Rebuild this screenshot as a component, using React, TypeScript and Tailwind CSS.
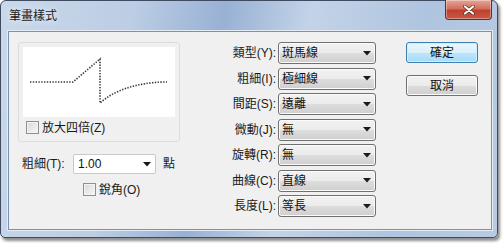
import React from "react";

const font = "font-['Liberation_Sans','Noto_Sans_CJK_TC',sans-serif]";

const rows = [
  { label: "類型(Y):", value: "斑馬線" },
  { label: "粗細(I):", value: "極細線" },
  { label: "間距(S):", value: "遠離" },
  { label: "微動(J):", value: "無" },
  { label: "旋轉(R):", value: "無" },
  { label: "曲線(C):", value: "直線" },
  { label: "長度(L):", value: "等長" },
];

function Arrow() {
  return (
    <svg width="8" height="5" viewBox="0 0 8 5" className="shrink-0">
      <path d="M0 0 H8 L4 4.5 Z" fill="#1a1a1a" />
    </svg>
  );
}

function Checkbox({ label }: { label: string }) {
  return (
    <div className="flex items-center gap-[3px]">
      <div className="w-[13px] h-[13px] border border-[#8e8f8f] bg-[linear-gradient(135deg,#d9d9d9,#f7f7f7)] shadow-[inset_0_0_0_1px_#f4f4f4]" />
      <span className="text-[12px] leading-none text-[#1a1a1a]">{label}</span>
    </div>
  );
}

function Combo({ value }: { value: string }) {
  return (
    <div className="h-[22px] w-[98px] flex items-center justify-between pl-[3px] pr-[4px] rounded-[3px] border border-[#707070] bg-[linear-gradient(180deg,#f2f2f2_0%,#ebebeb_50%,#dddddd_51%,#cfcfcf_100%)] shadow-[inset_0_0_0_1px_#fbfbfb]">
      <span className="text-[12px] leading-none text-[#111]">{value}</span>
      <Arrow />
    </div>
  );
}

function Button({ label, primary }: { label: string; primary?: boolean }) {
  return (
    <div
      className={
        primary
          ? "w-[72px] h-[21px] flex items-center justify-center rounded-[3px] border border-[#3c7fb1] bg-[linear-gradient(180deg,#eaf6fd_0%,#d9f0fc_50%,#bee6fd_51%,#a7d9f5_100%)] shadow-[inset_0_0_0_1px_#c9f1ff]"
          : "w-[72px] h-[21px] flex items-center justify-center rounded-[3px] border border-[#707070] bg-[linear-gradient(180deg,#f2f2f2_0%,#ebebeb_50%,#dddddd_51%,#cfcfcf_100%)] shadow-[inset_0_0_0_1px_#fbfbfb]"
      }
    >
      <span className="text-[12px] leading-none text-[#111]">{label}</span>
    </div>
  );
}

export default function App() {
  return (
    <div className={`w-[504px] h-[243px] bg-white ${font}`}>
      <div className="relative w-[498px] h-[238px] flex flex-col rounded-t-[6px] rounded-b-[5px] border border-[#3f4b5e] bg-[linear-gradient(100deg,#c9d8ea_0%,#bccde4_25%,#98b1d4_42%,#c3d3e8_58%,#afc4df_80%,#b9cbe3_100%)] shadow-[2px_3px_3px_rgba(0,0,0,0.45)]">
        {/* Title bar */}
        <div className="h-[30px] flex items-center pl-[8px]">
          <span className="text-[12px] text-[#1b1b1b] [text-shadow:0_0_6px_#ffffff]">筆畫樣式</span>
        </div>
        <div className="absolute top-[-1px] right-[5px] w-[47px] h-[20px] rounded-b-[4px] border border-t-0 border-[#6e2a22] bg-[linear-gradient(180deg,#e6a597_0%,#d2705f_45%,#c0412f_55%,#c55a42_100%)] flex items-center justify-center shadow-[inset_0_0_0_1px_rgba(255,255,255,0.35)]">
          <svg width="12" height="10" viewBox="0 0 12 10">
            <path d="M2 1.5 L10 8.5 M10 1.5 L2 8.5" stroke="#5a2a22" strokeWidth="3.6" strokeLinecap="round" />
            <path d="M2 1.5 L10 8.5 M10 1.5 L2 8.5" stroke="#ffffff" strokeWidth="2.2" strokeLinecap="round" />
          </svg>
        </div>

        {/* Client area */}
        <div className="ml-[7px] mr-[5px] h-[199px] border border-[#7c90b0] bg-[#f0f0f0] shadow-[0_0_0_1px_#e4ecf6] flex">
          {/* Left column */}
          <div className="ml-[9px] mt-[10px] w-[162px] flex flex-col">
            <div className="h-[100px] border border-[#dcdcdc] rounded-[3px] p-[4px] flex flex-col">
              <div className="h-[70px] bg-white">
                <svg width="152" height="70" viewBox="23 47 152 70">
                  <path
                    d="M30 82 L73 82 L100 59 L100 103 C112 92 135 82 167 82"
                    fill="none"
                    stroke="#3a3a3a"
                    strokeWidth="1.6"
                    strokeDasharray="1.4 1.4"
                  />
                </svg>
              </div>
              <div className="mt-[4px] pl-[3px]">
                <Checkbox label="放大四倍(Z)" />
              </div>
            </div>
            <div className="mt-[12px] flex items-center">
              <span className="ml-[4px] w-[51px] text-[12px] leading-none text-[#1a1a1a]">粗細(T):</span>
              <div className="h-[20px] w-[83px] flex items-center justify-between pl-[4px] pr-[4px] rounded-[2px] border border-[#c5c9d0] bg-white">
                <span className="text-[12px] leading-none text-[#111]">1.00</span>
                <Arrow />
              </div>
              <span className="ml-[7px] text-[12px] leading-none text-[#1a1a1a]">點</span>
            </div>
            <div className="mt-[9px] pl-[65px]">
              <Checkbox label="銳角(O)" />
            </div>
          </div>

          {/* Right selectors */}
          <div className="ml-[20px] mt-[10px] flex flex-col gap-[3.5px]">
            {rows.map((r) => (
              <div key={r.label} className="flex items-center">
                <span className="w-[78px] pr-[2px] text-right text-[12px] leading-none text-[#1a1a1a]">{r.label}</span>
                <Combo value={r.value} />
              </div>
            ))}
          </div>

          {/* Buttons */}
          <div className="ml-[30px] mt-[10px] flex flex-col gap-[12px]">
            <Button label="確定" primary />
            <Button label="取消" />
          </div>
        </div>
      </div>
    </div>
  );
}
